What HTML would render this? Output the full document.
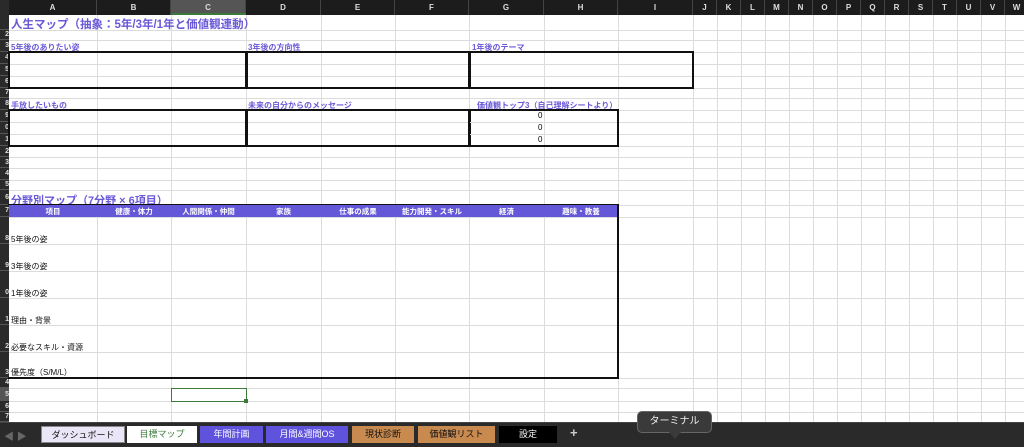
<!DOCTYPE html>
<html><head><meta charset="utf-8"><style>
*{margin:0;padding:0;box-sizing:border-box}
body{width:1024px;height:447px;overflow:hidden;background:#fff;position:relative;font-family:"Liberation Sans","Noto Sans CJK JP",sans-serif}
.a{position:absolute}
.v{position:absolute;top:15px;height:407px;width:1px;background:#dcdcdc}
.h{position:absolute;left:9px;width:1015px;height:1px;background:#dcdcdc}
.ch{position:absolute;top:0;height:15px;color:#ddd;font-size:8px;font-weight:bold;text-align:center;line-height:15px;border-right:1px solid #444}
.rh{position:absolute;left:0;width:9px;background:#2a2a2a;color:#ddd;font-size:7px;font-weight:bold;overflow:hidden;text-align:right;border-bottom:1px solid #555}
.lbl{position:absolute;color:#6a5ad8;font-size:8px;font-weight:bold;white-space:nowrap}
.box{position:absolute;border:2px solid #111}
.hd{position:absolute;top:206px;height:11px;color:#fff;font-size:7.5px;font-weight:bold;text-align:center;line-height:11px}
.rl{position:absolute;left:11px;font-size:8px;color:#111;white-space:nowrap}
.tab{position:absolute;top:426px;height:17px;font-size:9px;text-align:center;line-height:17px}
</style></head><body>
<!-- header -->
<div class="a" style="left:0;top:0;width:1024px;height:15px;background:#1c1c1c"></div>
<div class="a" style="left:0;top:0;width:9px;height:15px;background:#2a2a2a"></div>
<div class="ch" style="left:9px;width:88px">A</div>
<div class="ch" style="left:97px;width:74px">B</div>
<div class="ch" style="left:171px;width:75px;background:#555">C</div>
<div class="ch" style="left:246px;width:75px">D</div>
<div class="ch" style="left:321px;width:74px">E</div>
<div class="ch" style="left:395px;width:74px">F</div>
<div class="ch" style="left:469px;width:75px">G</div>
<div class="ch" style="left:544px;width:74px">H</div>
<div class="ch" style="left:618px;width:75px">I</div>
<div class="ch" style="left:693px;width:24px">J</div>
<div class="ch" style="left:717px;width:24px">K</div>
<div class="ch" style="left:741px;width:24px">L</div>
<div class="ch" style="left:765px;width:24px">M</div>
<div class="ch" style="left:789px;width:24px">N</div>
<div class="ch" style="left:813px;width:24px">O</div>
<div class="ch" style="left:837px;width:24px">P</div>
<div class="ch" style="left:861px;width:24px">Q</div>
<div class="ch" style="left:885px;width:24px">R</div>
<div class="ch" style="left:909px;width:24px">S</div>
<div class="ch" style="left:933px;width:24px">T</div>
<div class="ch" style="left:957px;width:24px">U</div>
<div class="ch" style="left:981px;width:24px">V</div>
<div class="ch" style="left:1005px;width:24px">W</div>
<div class="a" style="left:171px;top:13px;width:75px;height:2px;background:#3a7a3a"></div>
<!-- grid verticals -->
<div class="v" style="left:97px"></div><div class="v" style="left:171px"></div><div class="v" style="left:246px"></div><div class="v" style="left:321px"></div><div class="v" style="left:395px"></div><div class="v" style="left:469px"></div><div class="v" style="left:544px"></div><div class="v" style="left:618px"></div><div class="v" style="left:693px"></div><div class="v" style="left:717px"></div><div class="v" style="left:741px"></div><div class="v" style="left:765px"></div><div class="v" style="left:789px"></div><div class="v" style="left:813px"></div><div class="v" style="left:837px"></div><div class="v" style="left:861px"></div><div class="v" style="left:885px"></div><div class="v" style="left:909px"></div><div class="v" style="left:933px"></div><div class="v" style="left:957px"></div><div class="v" style="left:981px"></div><div class="v" style="left:1005px"></div>
<!-- grid horizontals -->
<div class="h" style="top:30px"></div><div class="h" style="top:40px"></div><div class="h" style="top:52px"></div><div class="h" style="top:64px"></div><div class="h" style="top:76px"></div><div class="h" style="top:88px"></div><div class="h" style="top:98px"></div><div class="h" style="top:110px"></div><div class="h" style="top:122px"></div><div class="h" style="top:134px"></div><div class="h" style="top:146px"></div><div class="h" style="top:157px"></div><div class="h" style="top:168px"></div><div class="h" style="top:180px"></div><div class="h" style="top:190px"></div><div class="h" style="top:205px"></div><div class="h" style="top:217px"></div><div class="h" style="top:244px"></div><div class="h" style="top:271px"></div><div class="h" style="top:298px"></div><div class="h" style="top:325px"></div><div class="h" style="top:352px"></div><div class="h" style="top:378px"></div><div class="h" style="top:388px"></div><div class="h" style="top:401px"></div><div class="h" style="top:412px"></div>
<!-- row headers -->
<div class="rh" style="top:15px;height:15px;line-height:15px"></div>
<div class="rh" style="top:30px;height:10px;line-height:10px">2</div>
<div class="rh" style="top:40px;height:12px;line-height:12px">3</div>
<div class="rh" style="top:52px;height:12px;line-height:12px">4</div>
<div class="rh" style="top:64px;height:12px;line-height:12px">5</div>
<div class="rh" style="top:76px;height:12px;line-height:12px">6</div>
<div class="rh" style="top:88px;height:10px;line-height:10px">7</div>
<div class="rh" style="top:98px;height:12px;line-height:12px">8</div>
<div class="rh" style="top:110px;height:12px;line-height:12px">9</div>
<div class="rh" style="top:122px;height:12px;line-height:12px">0</div>
<div class="rh" style="top:134px;height:12px;line-height:12px">1</div>
<div class="rh" style="top:146px;height:11px;line-height:11px">2</div>
<div class="rh" style="top:157px;height:11px;line-height:11px">3</div>
<div class="rh" style="top:168px;height:12px;line-height:12px">4</div>
<div class="rh" style="top:180px;height:10px;line-height:10px">5</div>
<div class="rh" style="top:190px;height:15px;line-height:15px">6</div>
<div class="rh" style="top:205px;height:12px;line-height:12px">7</div>
<div class="rh" style="top:217px;height:27px;line-height:44px">8</div>
<div class="rh" style="top:244px;height:27px;line-height:44px">9</div>
<div class="rh" style="top:271px;height:27px;line-height:44px">0</div>
<div class="rh" style="top:298px;height:27px;line-height:44px">1</div>
<div class="rh" style="top:325px;height:27px;line-height:44px">2</div>
<div class="rh" style="top:352px;height:26px;line-height:42px">3</div>
<div class="rh" style="top:378px;height:10px;line-height:10px">4</div>
<div class="rh" style="top:388px;height:13px;line-height:13px;background:#555">5</div>
<div class="rh" style="top:401px;height:11px;line-height:11px">6</div>
<div class="rh" style="top:412px;height:10px;line-height:10px">7</div>
<!-- top section -->
<div class="lbl" style="left:11px;top:16px;font-size:11.5px">人生マップ（抽象：5年/3年/1年と価値観連動）</div>
<div class="lbl" style="left:11px;top:42px">5年後のありたい姿</div>
<div class="lbl" style="left:248px;top:42px">3年後の方向性</div>
<div class="lbl" style="left:472px;top:42px">1年後のテーマ</div>
<div class="box" style="left:8px;top:51px;width:240px;height:38px"></div>
<div class="box" style="left:245px;top:51px;width:226px;height:38px"></div>
<div class="box" style="left:468px;top:51px;width:226px;height:38px"></div>
<div class="lbl" style="left:11px;top:100px">手放したいもの</div>
<div class="lbl" style="left:248px;top:100px">未来の自分からのメッセージ</div>
<div class="lbl" style="left:477px;top:100px">価値観トップ3（自己理解シートより）</div>
<div class="box" style="left:8px;top:109px;width:240px;height:38px"></div>
<div class="box" style="left:245px;top:109px;width:226px;height:38px"></div>
<div class="box" style="left:468px;top:109px;width:151px;height:38px"></div>
<div class="a" style="left:470px;top:122px;width:147px;height:1px;background:#dcdcdc"></div>
<div class="a" style="left:470px;top:134px;width:147px;height:1px;background:#dcdcdc"></div>
<div class="a" style="left:538px;top:111px;font-size:8px">0</div>
<div class="a" style="left:538px;top:123px;font-size:8px">0</div>
<div class="a" style="left:538px;top:135px;font-size:8px">0</div>
<!-- bottom section -->
<div class="lbl" style="left:11px;top:192px;font-size:11px">分野別マップ（7分野 × 6項目）</div>
<div class="a" style="left:9px;top:205px;width:609px;height:12px;background:#6457d8"></div>
<div class="hd" style="left:9px;width:88px">項目</div>
<div class="hd" style="left:97px;width:74px">健康・体力</div>
<div class="hd" style="left:171px;width:75px">人間関係・仲間</div>
<div class="hd" style="left:246px;width:75px">家族</div>
<div class="hd" style="left:321px;width:74px">仕事の成果</div>
<div class="hd" style="left:395px;width:74px">能力開発・スキル</div>
<div class="hd" style="left:469px;width:75px">経済</div>
<div class="hd" style="left:544px;width:74px">趣味・教養</div>
<div class="box" style="left:8px;top:204px;width:611px;height:175px;border-top:1px solid #111;border-left:none"></div>
<div class="rl" style="top:234px">5年後の姿</div>
<div class="rl" style="top:261px">3年後の姿</div>
<div class="rl" style="top:288px">1年後の姿</div>
<div class="rl" style="top:315px">理由・背景</div>
<div class="rl" style="top:342px">必要なスキル・資源</div>
<div class="rl" style="top:367px">優先度（S/M/L）</div>
<!-- selected cell -->
<div class="a" style="left:171px;top:388px;width:76px;height:14px;border:1.5px solid #3d7a3d"></div>
<div class="a" style="left:244px;top:399px;width:4px;height:4px;background:#3d7a3d"></div>
<!-- tab bar -->
<div class="a" style="left:0;top:422px;width:1024px;height:25px;background:#2a2a2a;border-top:1px solid #444"></div>
<div class="a" style="left:4px;top:428px;color:#666;font-size:10px">◀ ▶</div>
<div class="tab" style="left:41px;width:84px;background:#eae6f8;color:#111;border:1px solid #888">ダッシュボード</div>
<div class="tab" style="left:127px;width:70px;background:#fff;color:#3d7a3d">目標マップ</div>
<div class="tab" style="left:200px;width:63px;background:#5f52dd;color:#fff">年間計画</div>
<div class="tab" style="left:266px;width:82px;background:#5f52dd;color:#fff">月間&amp;週間OS</div>
<div class="tab" style="left:352px;width:62px;background:#c98a50;color:#111">現状診断</div>
<div class="tab" style="left:418px;width:77px;background:#c98a50;color:#111">価値観リスト</div>
<div class="tab" style="left:499px;width:58px;background:#000;color:#fff">設定</div>
<div class="a" style="left:570px;top:425px;color:#ccc;font-size:13px;font-weight:bold">+</div>
<div class="a" style="left:637px;top:411px;width:75px;height:22px;background:#3a3a3a;border:1px solid #666;border-radius:5px;color:#eee;font-size:10px;text-align:center;line-height:20px">ターミナル</div>
<div class="a" style="left:669px;top:432px;width:0;height:0;border-left:6px solid transparent;border-right:6px solid transparent;border-top:7px solid #3a3a3a"></div>
</body></html>
